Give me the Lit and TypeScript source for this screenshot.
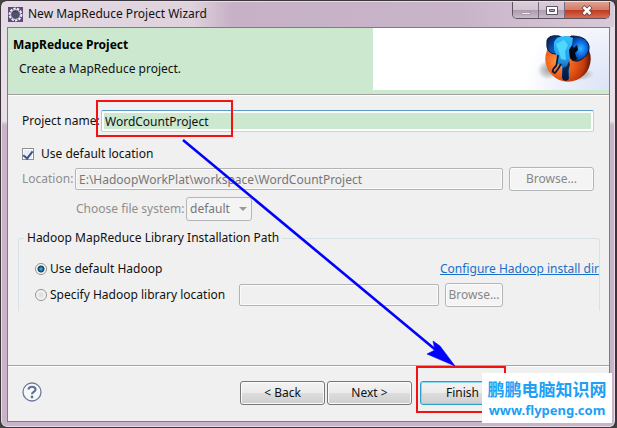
import { LitElement, html, css } from "lit";
import { customElement, state } from "lit/decorators.js";

@customElement("elephant-logo")
class ElephantLogo extends LitElement {
  static styles = css`
    :host { display: block; width: 60px; height: 52px; }
    svg { display: block; width: 60px; height: 52px; }
  `;
  render() {
    return html`<svg viewBox="0 0 60 52" aria-hidden="true">
      <defs>
        <radialGradient id="ball" cx="30%" cy="55%" r="70%">
          <stop offset="0" stop-color="#ffa04c" />
          <stop offset=".4" stop-color="#f4651a" />
          <stop offset=".8" stop-color="#c23a0c" />
          <stop offset="1" stop-color="#5c1505" />
        </radialGradient>
        <linearGradient id="trunk" x1="0" y1="0" x2="0" y2="1">
          <stop offset="0" stop-color="#2fc0ff" />
          <stop offset=".5" stop-color="#2a9cf0" />
          <stop offset="1" stop-color="#061a48" />
        </linearGradient>
        <radialGradient id="shade">
          <stop offset="0" stop-color="#888" stop-opacity=".75" />
          <stop offset=".6" stop-color="#aaa" stop-opacity=".5" />
          <stop offset="1" stop-color="#ccc" stop-opacity="0" />
        </radialGradient>
        <radialGradient id="ear" cx="60%" cy="50%" r="55%">
          <stop offset="0" stop-color="#35b8ff" />
          <stop offset=".5" stop-color="#0d6be6" />
          <stop offset="1" stop-color="#06266e" />
        </radialGradient>
        <linearGradient id="left-ear" x1="0" y1="0" x2="1" y2="1">
          <stop offset="0" stop-color="#04123a" />
          <stop offset=".5" stop-color="#0c4fae" />
          <stop offset="1" stop-color="#1684e6" />
        </linearGradient>
      </defs>
      <ellipse cx="13" cy="37" rx="11" ry="10" fill="url(#shade)" />
      <ellipse cx="44" cy="41" rx="16" ry="7" fill="url(#shade)" />
      <circle cx="33" cy="26" r="22.7" fill="url(#ball)" />
      <path d="M24 3C17 2 11 4 12 10C11 17 15 21 21 21L27 19L28 5Z" fill="url(#left-ear)" stroke="#041237" />
      <path d="M36 3C45 3 52 5 54 13C55 20 49 26 43 28Q37 29 34 22L33 8Z" fill="url(#ear)" stroke="#04163e" />
      <path d="M35 10L39 15L42 12L43 17L40 20L42 26L38 28L33 23Z" fill="#020918" />
      <path d="M22 5Q31 1 38 5L37 12L34 17L35 26L34 34L34 46Q29 50 27 45L27 33L23 31L22 24L19 16L19 9Z" fill="url(#trunk)" />
      <path d="M21 11L29 7L33 12L30 18L31 27L26 26L24 19Z" fill="#5ce6ff" opacity=".75" />
      <path d="M23 22L22 29Q22 33 19 35Q16 39 20 40L23 36L26 31" fill="none" stroke="#061a48" stroke-width="1.8" />
      <path d="M28 35L27 45Q30 49 33 47L33 38L35 32L34 28L32 33Z" fill="#061538" opacity=".8" />
    </svg>`;
  }
}

@customElement("app-root")
class AppRoot extends LitElement {
  @state() private useDefault = true;

  static styles = css`
    :host {
      display: block;
      font-family: "Noto Sans", "Noto Sans CJK SC", sans-serif;
      font-size: 12px;
      line-height: 18px;
      color: #111;
      background: #444;
    }
    * { box-sizing: border-box; }
    button, input, select { font: inherit; margin: 0; }
    .window {
      position: relative;
      display: flex;
      flex-direction: column;
      min-height: 100vh;
      padding: 1px 5px 5px 6px;
      border: 1px solid #3c363c;
      border-right-width: 2px;
      border-radius: 7px;
      background: linear-gradient(#e6dce5 0, #e9e0e8 120px, #c8b3c8 124px, #c8b3c8 100%);
      box-shadow: inset 0 0 0 1px #e8dce8;
      overflow: hidden;
    }
    .titlebar {
      display: flex;
      align-items: flex-start;
      height: 25px;
      margin: 0 -4px 0 -5px;
      padding: 0 4px 0 6px;
      background: linear-gradient(90deg, #e5dbe4 0, #ded2dd 190px, #c6b1c6 230px, #c8b4c9 75%, #d9cad8 100%);
    }
    .app-icon { width: 15px; height: 15px; margin: 5px 5px 0 0; }
    .title { flex: 1; margin: 0; padding-top: 3px; font-size: 12px; font-weight: 400; }
    .controls {
      display: flex;
      height: 17px;
      border: 1px solid #5f5260;
      border-top: 0;
      border-radius: 0 0 5px 5px;
      overflow: hidden;
    }
    .control {
      width: 26px;
      padding: 0;
      border: 0;
      border-right: 1px solid #78697a;
      background: linear-gradient(#dacdd9 0, #d1c3d0 50%, #ad9cae 52%, #c8b9c8 100%);
    }
    .control.close { width: 44px; border-right: 0; background: linear-gradient(#dda293 0, #d57a66 48%, #bd3c24 52%, #d96b50 100%); }
    .control svg { display: block; margin: 0 auto; }
    .client {
      flex: 1;
      display: flex;
      flex-direction: column;
      border: 1px solid #85778a;
      background: #f0f0f0;
    }
    .banner {
      display: flex;
      justify-content: space-between;
      height: 67px;
      padding-bottom: 4px;
      background: #cce8cf;
      border-bottom: 1px solid #a0a0a0;
      box-shadow: 0 1px #fff;
    }
    .heading { padding: 8px 5px; }
    .heading h2 { margin: 0 0 6px; font-size: 12px; line-height: 18px; font-weight: 700; color: #000; }
    .heading p { margin: 0 6px; }
    .art {
      display: flex;
      justify-content: flex-end;
      flex: 0 0 236px;
      padding: 5px 14px 0 0;
      background: radial-gradient(circle at 100% 100%, #dce3f6 0, #eef1fb 50px, #fff 85px);
    }
    .form { flex: 1; padding: 15px 15px 0 14px; }
    .line { display: flex; align-items: center; }
    .name-line { height: 22px; }
    .name-line label { width: 79px; white-space: nowrap; }
    .text {
      flex: 1;
      min-width: 0;
      height: 22px;
      padding: 0 3px;
      border: 1px solid #b4b4b4;
      border-radius: 2px;
      background: #f0f0f0;
      box-shadow: inset 0 0 0 1px #fafafa;
      color: #777;
    }
    .text.active {
      border-color: #5b9bcb #b3d5ec #b7d9ed #a9cce6;
      background: #cce8cf;
      box-shadow: inset 0 0 0 2px #fff;
      color: #111;
    }
    .name-field { position: relative; display: flex; flex: 1; }
    .mark { position: absolute; border: 2px solid #f31111; pointer-events: none; }
    .mark.name { left: -5px; top: -10px; width: 137px; height: 37px; }
    .mark.finish { left: -4px; top: -15px; width: 90px; height: 47px; }
    .check-line { height: 18px; margin-top: 13px; gap: 7px; }
    .tick {
      appearance: none;
      display: grid;
      place-items: center;
      width: 12px;
      height: 12px;
      border: 1px solid #8e8f8f;
      background: #e9edf2;
      box-shadow: inset 0 0 0 1px #fff;
    }
    .tick:checked::before {
      content: "";
      width: 4px;
      height: 8px;
      border: solid #3a4f94;
      border-width: 0 2px 2px 0;
      transform: rotate(38deg);
    }
    .path-line { height: 24px; margin-top: 4px; }
    .muted { color: #8f8f8f; }
    .path-line label { width: 53px; }
    .btn {
      height: 24px;
      padding: 0;
      border: 1px solid #777;
      border-radius: 3px;
      background: linear-gradient(#f3f3f3 0, #ebebeb 49%, #dddddd 51%, #cfcfcf 100%);
      box-shadow: inset 0 0 0 1px #fbfbfb;
      color: #111;
    }
    .btn:disabled { border-color: #b2b6b9; background: #f4f4f4; color: #878787; }
    .wide { width: 85px; }
    .small { width: 58px; }
    .path-line .btn { margin-left: 6px; }
    .system-line { height: 24px; margin-top: 6px; padding-left: 54px; }
    .system-line label { width: 110px; white-space: nowrap; }
    .picker { position: relative; display: flex; }
    .picker select {
      appearance: none;
      width: 66px;
      height: 24px;
      padding: 0 3px;
      border: 1px solid #b2b6b9;
      border-radius: 3px;
      background: #f4f4f4;
      color: #777;
      opacity: 1;
    }
    .picker svg { position: absolute; right: 5px; top: 10px; pointer-events: none; }
    .group {
      margin: 8px -6px 0 -4px;
      height: 82px;
      padding: 0;
      border: 1px solid #d8e1e6;
      border-bottom: 0;
      border-radius: 3px 3px 0 0;
    }
    .group legend { margin-left: 5px; padding: 0 3px; }
    .choice { display: flex; align-items: center; height: 26px; padding-left: 16px; }
    .choice.first { margin-top: 9px; }
    .choice label { width: 189px; white-space: nowrap; }
    .choice .btn { margin: 0 96px 0 6px; }
    .radio {
      appearance: none;
      width: 12px;
      height: 12px;
      margin-right: 3px;
      border: 1px solid #8e8f8f;
      border-radius: 50%;
      background: radial-gradient(circle, #dcdcdc 0, #e8e8e8 3px, #fff 5px);
    }
    .radio:checked { background: radial-gradient(circle at 50% 50%, #54bfe8 0, #176a98 2px, #103b5b 3px, #fff 4px); }
    a { margin-left: auto; color: #1a6fca; white-space: nowrap; text-decoration: underline; }
    .footer {
      display: flex;
      align-items: flex-start;
      height: 56px;
      padding: 15px 16px 0 14px;
      border-top: 1px solid #a5a5a5;
      box-shadow: inset 0 1px #fff;
    }
    .help { width: 20px; height: 20px; margin: 1px auto 0 0; padding: 0; border: 0; background: none; }
    .help svg { display: block; }
    .actions { display: flex; }
    .next { margin: 0 8px 0 2px; }
    .final { position: relative; display: flex; margin-right: 3px; }
    .default { border-color: #2d9fc9; box-shadow: inset 0 0 0 1px #86d8f2; }
    .cancel { width: 85px; }
    .arrow { position: absolute; left: 176px; top: 134px; pointer-events: none; }
    .watermark {
      position: absolute;
      right: 3px;
      bottom: 4px;
      width: 130px;
      height: 50px;
      padding-top: 4px;
      background: #fff;
      color: #20a0f4;
      text-align: center;
      font-weight: 700;
      white-space: nowrap;
    }
    .watermark .cn { display: block; font: 700 17px/24px "Noto Sans CJK SC", sans-serif; }
    .watermark .site { display: block; font-size: 13px; line-height: 18px; }
  `;

  render() {
    return html`
      <main class="window">
        <header class="titlebar">
          <svg class="app-icon" viewBox="0 0 15 15" aria-hidden="true">
            <rect width="15" height="15" fill="#5b4a80" />
            <circle cx="7.5" cy="7.5" r="5.8" fill="none" stroke="#eee" stroke-width="2.2" stroke-dasharray="2.4 1.1" />
            <circle cx="7.5" cy="7.5" r="4.8" fill="#3f3d58" stroke="#dedbe6" />
            <path d="M4 6h7M3.5 8h8M4 10h7" stroke="#77749a" stroke-width=".7" />
          </svg>
          <h1 class="title">New MapReduce Project Wizard</h1>
          <div class="controls">
            <button class="control" aria-label="Minimize">
              <svg width="12" height="14"><rect x="1.5" y="9.5" width="9" height="2" fill="#eee" stroke="#a99ba9" /></svg>
            </button>
            <button class="control" aria-label="Maximize">
              <svg width="12" height="14"><path d="M.5 3.5h11v8H.5z" fill="#fff" stroke="#595364" /><path d="M3.5 6.5h5v2h-5z" fill="#b5a8b6" stroke="#595364" /></svg>
            </button>
            <button class="control close" aria-label="Close">
              <svg width="12" height="14"><path d="M2 3.500L10 11.500M10 3.500L2 11.500" stroke="#6b4546" stroke-width="4.400" /><path d="M2.500 4L9.500 11M9.500 4L2.500 11" stroke="#fff" stroke-width="2.600" /></svg>
            </button>
          </div>
        </header>
        <section class="client">
          <div class="banner">
            <div class="heading"><h2>MapReduce Project</h2><p>Create a MapReduce project.</p></div>
            <div class="art"><elephant-logo></elephant-logo></div>
          </div>
          <div class="form">
            <div class="line name-line">
              <label for="name">Project name:</label>
              <div class="name-field">
                <input id="name" class="text active" value="WordCountProject" />
                <span class="mark name"></span>
              </div>
            </div>
            <div class="line check-line">
              <input id="default" class="tick" type="checkbox" .checked=${this.useDefault}
                @change=${(e: Event) => (this.useDefault = (e.target as HTMLInputElement).checked)} />
              <label for="default">Use default location</label>
            </div>
            <div class="line path-line">
              <label for="path" class="muted">Location:</label>
              <input id="path" class="text" value="E:\\HadoopWorkPlat\\workspace\\WordCountProject" ?disabled=${this.useDefault} />
              <button class="btn wide" ?disabled=${this.useDefault}>Browse...</button>
            </div>
            <div class="line system-line">
              <label for="system" class="muted">Choose file system:</label>
              <div class="picker">
                <select id="system" ?disabled=${this.useDefault}><option>default</option></select>
                <svg width="8" height="5" aria-hidden="true"><path d="M0 0h8L4 4z" fill="#999" /></svg>
              </div>
            </div>
            <fieldset class="group">
              <legend>Hadoop MapReduce Library Installation Path</legend>
              <div class="choice first">
                <input id="builtin" class="radio" type="radio" name="hadoop" checked />
                <label for="builtin">Use default Hadoop</label>
                <a href="#configure">Configure Hadoop install dir</a>
              </div>
              <div class="choice">
                <input id="custom" class="radio" type="radio" name="hadoop" />
                <label for="custom">Specify Hadoop library location</label>
                <input class="text" aria-label="Hadoop library location" disabled />
                <button class="btn small" disabled>Browse...</button>
              </div>
            </fieldset>
          </div>
          <footer class="footer">
            <button class="help" aria-label="Help">
              <svg width="20" height="20"><circle cx="10" cy="10" r="9" fill="#f7f8fa" stroke="#6c7c9c" stroke-width="1.300" /><path d="M6.500 7.500C6.500 3.800 13.500 3.800 13.500 7.500C13.500 10 10 9.700 10 12.300" fill="none" stroke="#5f7194" stroke-width="2.200" /><circle cx="10" cy="15" r="1.400" fill="#5f7194" /></svg>
            </button>
            <div class="actions">
              <button class="btn wide">&lt; Back</button>
              <button class="btn wide next">Next &gt;</button>
              <div class="final"><button class="btn wide default">Finish</button><span class="mark finish"></span></div>
              <button class="btn cancel" aria-label="Cancel"></button>
            </div>
          </footer>
        </section>
        <svg class="arrow" width="290" height="240" aria-hidden="true">
          <path d="M6 5L260 216" stroke="#0000fe" stroke-width="2.6" />
          <path d="M278 231L250 219L258 215L256 206L263 211Z" fill="#0000fe" stroke="#0000fe" stroke-width=".6" />
        </svg>
        <aside class="watermark"><span class="cn">鹏鹏电脑知识网</span><span class="site">www.flypeng.com</span></aside>
      </main>
    `;
  }
}
